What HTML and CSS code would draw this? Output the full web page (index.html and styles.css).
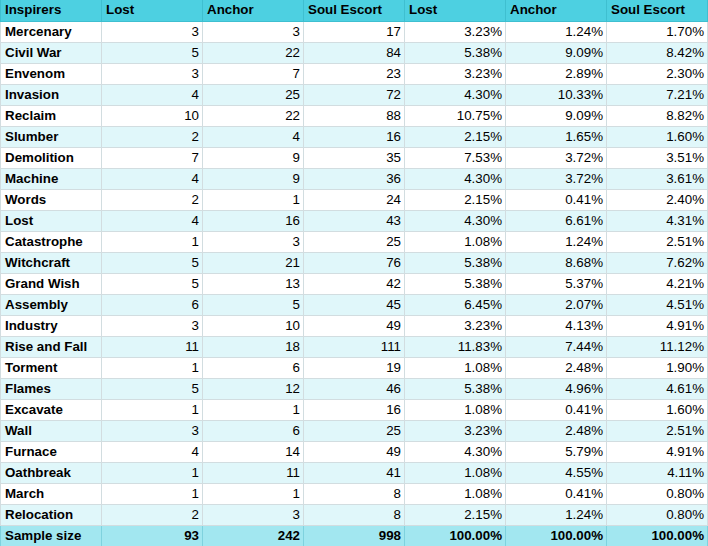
FILE: index.html
```html
<!DOCTYPE html>
<html>
<head>
<meta charset="utf-8">
<link rel="stylesheet" href="styles.css">
</head>
<body>
<table class="grid">
<thead>
<tr><th>Inspirers</th><th>Lost</th><th>Anchor</th><th>Soul Escort</th><th>Lost</th><th>Anchor</th><th>Soul Escort</th></tr>
</thead>
<tbody>
<tr><td class="name">Mercenary</td><td>3</td><td>3</td><td>17</td><td>3.23%</td><td>1.24%</td><td>1.70%</td></tr>
<tr><td class="name">Civil War</td><td>5</td><td>22</td><td>84</td><td>5.38%</td><td>9.09%</td><td>8.42%</td></tr>
<tr><td class="name">Envenom</td><td>3</td><td>7</td><td>23</td><td>3.23%</td><td>2.89%</td><td>2.30%</td></tr>
<tr><td class="name">Invasion</td><td>4</td><td>25</td><td>72</td><td>4.30%</td><td>10.33%</td><td>7.21%</td></tr>
<tr><td class="name">Reclaim</td><td>10</td><td>22</td><td>88</td><td>10.75%</td><td>9.09%</td><td>8.82%</td></tr>
<tr><td class="name">Slumber</td><td>2</td><td>4</td><td>16</td><td>2.15%</td><td>1.65%</td><td>1.60%</td></tr>
<tr><td class="name">Demolition</td><td>7</td><td>9</td><td>35</td><td>7.53%</td><td>3.72%</td><td>3.51%</td></tr>
<tr><td class="name">Machine</td><td>4</td><td>9</td><td>36</td><td>4.30%</td><td>3.72%</td><td>3.61%</td></tr>
<tr><td class="name">Words</td><td>2</td><td>1</td><td>24</td><td>2.15%</td><td>0.41%</td><td>2.40%</td></tr>
<tr><td class="name">Lost</td><td>4</td><td>16</td><td>43</td><td>4.30%</td><td>6.61%</td><td>4.31%</td></tr>
<tr><td class="name">Catastrophe</td><td>1</td><td>3</td><td>25</td><td>1.08%</td><td>1.24%</td><td>2.51%</td></tr>
<tr><td class="name">Witchcraft</td><td>5</td><td>21</td><td>76</td><td>5.38%</td><td>8.68%</td><td>7.62%</td></tr>
<tr><td class="name">Grand Wish</td><td>5</td><td>13</td><td>42</td><td>5.38%</td><td>5.37%</td><td>4.21%</td></tr>
<tr><td class="name">Assembly</td><td>6</td><td>5</td><td>45</td><td>6.45%</td><td>2.07%</td><td>4.51%</td></tr>
<tr><td class="name">Industry</td><td>3</td><td>10</td><td>49</td><td>3.23%</td><td>4.13%</td><td>4.91%</td></tr>
<tr><td class="name">Rise and Fall</td><td>11</td><td>18</td><td>111</td><td>11.83%</td><td>7.44%</td><td>11.12%</td></tr>
<tr><td class="name">Torment</td><td>1</td><td>6</td><td>19</td><td>1.08%</td><td>2.48%</td><td>1.90%</td></tr>
<tr><td class="name">Flames</td><td>5</td><td>12</td><td>46</td><td>5.38%</td><td>4.96%</td><td>4.61%</td></tr>
<tr><td class="name">Excavate</td><td>1</td><td>1</td><td>16</td><td>1.08%</td><td>0.41%</td><td>1.60%</td></tr>
<tr><td class="name">Wall</td><td>3</td><td>6</td><td>25</td><td>3.23%</td><td>2.48%</td><td>2.51%</td></tr>
<tr><td class="name">Furnace</td><td>4</td><td>14</td><td>49</td><td>4.30%</td><td>5.79%</td><td>4.91%</td></tr>
<tr><td class="name">Oathbreak</td><td>1</td><td>11</td><td>41</td><td>1.08%</td><td>4.55%</td><td>4.11%</td></tr>
<tr><td class="name">March</td><td>1</td><td>1</td><td>8</td><td>1.08%</td><td>0.41%</td><td>0.80%</td></tr>
<tr><td class="name">Relocation</td><td>2</td><td>3</td><td>8</td><td>2.15%</td><td>1.24%</td><td>0.80%</td></tr>
</tbody>
<tfoot>
<tr><td class="name">Sample size</td><td>93</td><td>242</td><td>998</td><td>100.00%</td><td>100.00%</td><td>100.00%</td></tr>
</tfoot>
</table>
</body>
</html>
```
FILE: styles.css
```css
html, body {
  margin: 0;
  padding: 0;
  background: #ffffff;
}
.grid {
  border-collapse: collapse;
  table-layout: fixed;
  width: 708px;
  font-family: "Liberation Sans", Arial, sans-serif;
  font-size: 13.33px;
  color: #000;
}
.grid th, .grid td {
  height: 20px;
  padding: 0 3px 0 4px;
  border: 1px solid #d2dde0;
  border-top: none;
  white-space: nowrap;
  overflow: hidden;
  line-height: 20px;
  box-sizing: border-box;
  width: 101px;
}
.grid th {
  background: #4dd0e1;
  text-align: left;
  font-weight: bold;
  border-color: #3fbfd0;
}
.grid td {
  text-align: right;
}
.grid td.name {
  text-align: left;
  font-weight: bold;
}
.grid tbody tr:nth-child(even) td {
  background: #e0f7fa;
}
.grid tfoot td {
  background: #a2e7f0;
  font-weight: bold;
  border-color: #7fd2de;
}
.grid tr {
  height: 21px;
}
```
